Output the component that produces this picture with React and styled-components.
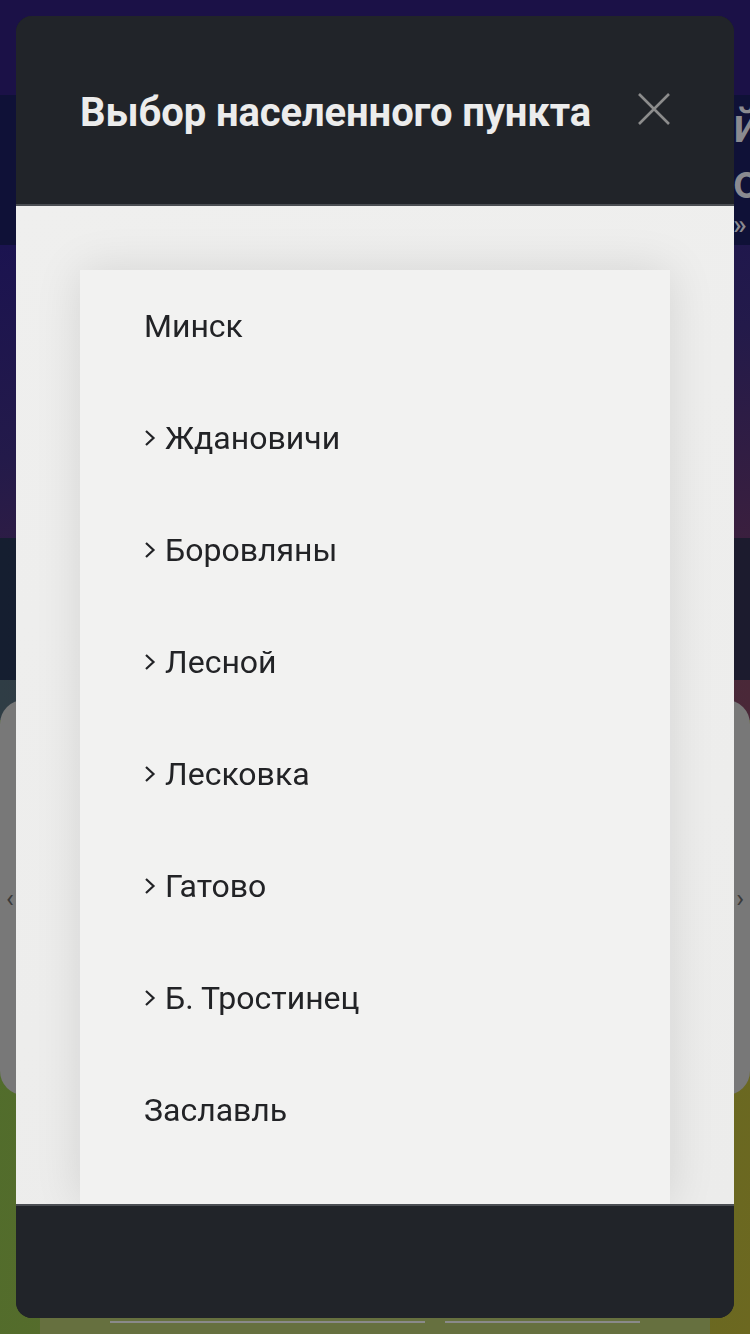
import React from "react";
import styled, { createGlobalStyle } from "styled-components";

const Global = createGlobalStyle`
  html, body { margin: 0; padding: 0; }
  body { font-family: Roboto, "Noto Sans", sans-serif; overflow: hidden; background: #1b1147; }
  * { box-sizing: border-box; }
`;

const Page = styled.div`
  width: 750px;
  height: 1334px;
  overflow: hidden;
  display: flex;
  flex-direction: column;
`;

const TopBar = styled.div`
  flex: none;
  height: 95px;
  background: #1b1147;
`;

const Hero = styled.div`
  flex: none;
  height: 150px;
  background: #0f1137;
  padding: 2px 0 0 733px;
  overflow: hidden;
  color: #8a8a90;
  font-family: Roboto, sans-serif;
  font-weight: 500;
  white-space: nowrap;
`;

const HeroLine = styled.div`
  font-size: ${(p) => p.$size}px;
  line-height: ${(p) => p.$lh}px;
`;

const Promo = styled.div`
  flex: none;
  height: 293px;
  background: linear-gradient(170deg, #1b1350 0%, #231a4a 50%, #3a1f3e 100%);
`;

const DarkBand = styled.div`
  flex: none;
  height: 142px;
  background: linear-gradient(90deg, #151e30 0%, #1c1b2e 100%);
`;

const Lower = styled.div`
  flex: 1;
  min-height: 0;
  overflow: hidden;
  background: linear-gradient(100deg, #4f6d2c 0%, #5f6a2a 50%, #6c6820 100%);
  display: flex;
  flex-direction: column;
`;

const Strip = styled.div`
  flex: none;
  height: 40px;
  margin-bottom: -20px;
  background: linear-gradient(90deg, #2f3d45 0%, #3d3040 60%, #4a2838 100%);
`;

const Carousel = styled.div`
  flex: none;
  height: 395px;
  background: #787878;
  border-radius: 24px;
  display: flex;
  align-items: center;
  justify-content: space-between;
  padding: 0 6px;
  color: #3a3a3a;
  font-size: 26px;
`;

const Panel = styled.div`
  flex: none;
  margin: 223px 40px 0;
  height: 40px;
  background: #66703f;
  display: flex;
  gap: 20px;
  padding: 3px 70px 0;
`;

const PanelLine = styled.div`
  height: 2px;
  width: ${(p) => p.$w}px;
  background: #8a8a8a;
`;

const Overlay = styled.div`
  position: fixed;
  inset: 16px;
  border-radius: 16px;
  overflow: hidden;
  display: flex;
  flex-direction: column;
  background: #212429;
`;

const Header = styled.div`
  height: 190px;
  flex: none;
  display: flex;
  align-items: center;
  justify-content: space-between;
  padding: 0 64px 2px;
  background: #212429;
  border-bottom: 2px solid #4b4e53;
`;

const Title = styled.h2`
  margin: 0;
  font-family: Roboto, sans-serif;
  font-weight: 700;
  font-size: 40px;
  line-height: 48px;
  padding-top: 8px;
  letter-spacing: -0.1px;
  color: #ececec;
`;

const Close = styled.button`
  width: 32px;
  height: 32px;
  padding: 0;
  border: 0;
  background: none;
  display: flex;
`;

const Body = styled.div`
  flex: 1;
  background: linear-gradient(160deg, #efefee 0%, #ececeb 100%);
  padding: 64px 64px 0;
  overflow: hidden;
`;

const List = styled.ul`
  list-style: none;
  margin: 0;
  padding: 0;
  background: #f2f2f1;
  box-shadow: 0 0 44px rgba(0, 0, 0, 0.11);
  min-height: 100%;
`;

const Item = styled.li`
  height: 112px;
  display: flex;
  align-items: center;
  gap: 9px;
  padding-left: 64px;
  font-family: Roboto, sans-serif;
  font-size: 32px;
  color: #222326;
`;

const Footer = styled.div`
  height: 114px;
  flex: none;
  background: #212429;
  border-top: 2px solid #4b4e53;
`;

const Chevron = () => (
  <svg width="12" height="18" viewBox="0 0 12 18" fill="none">
    <polyline points="2,2 9.5,9 2,16" stroke="#222326" strokeWidth="2.2" />
  </svg>
);

const items = [
  { name: "Минск", sub: false },
  { name: "Ждановичи", sub: true },
  { name: "Боровляны", sub: true },
  { name: "Лесной", sub: true },
  { name: "Лесковка", sub: true },
  { name: "Гатово", sub: true },
  { name: "Б. Тростинец", sub: true },
  { name: "Заславль", sub: false },
];

export default function App() {
  return (
    <>
      <Global />
      <Page>
        <TopBar />
        <Hero>
          <HeroLine $size={48} $lh={58}>й</HeroLine>
          <HeroLine $size={48} $lh={54}>о</HeroLine>
          <HeroLine $size={28} $lh={32}>»</HeroLine>
        </Hero>
        <Promo />
        <DarkBand />
        <Lower>
          <Strip />
          <Carousel>
            <span>‹</span>
            <span>›</span>
          </Carousel>
          <Panel>
            <PanelLine $w={316} />
            <PanelLine $w={196} />
          </Panel>
        </Lower>
      </Page>
      <Overlay>
        <Header>
          <Title>Выбор населенного пункта</Title>
          <Close aria-label="Закрыть">
            <svg width="32" height="32" viewBox="0 0 32 32">
              <path d="M1 1 L31 31 M31 1 L1 31" stroke="#8c8c8c" strokeWidth="2.6" />
            </svg>
          </Close>
        </Header>
        <Body>
          <List>
            {items.map((it) => (
              <Item key={it.name}>
                {it.sub && <Chevron />}
                {it.name}
              </Item>
            ))}
          </List>
        </Body>
        <Footer />
      </Overlay>
    </>
  );
}
